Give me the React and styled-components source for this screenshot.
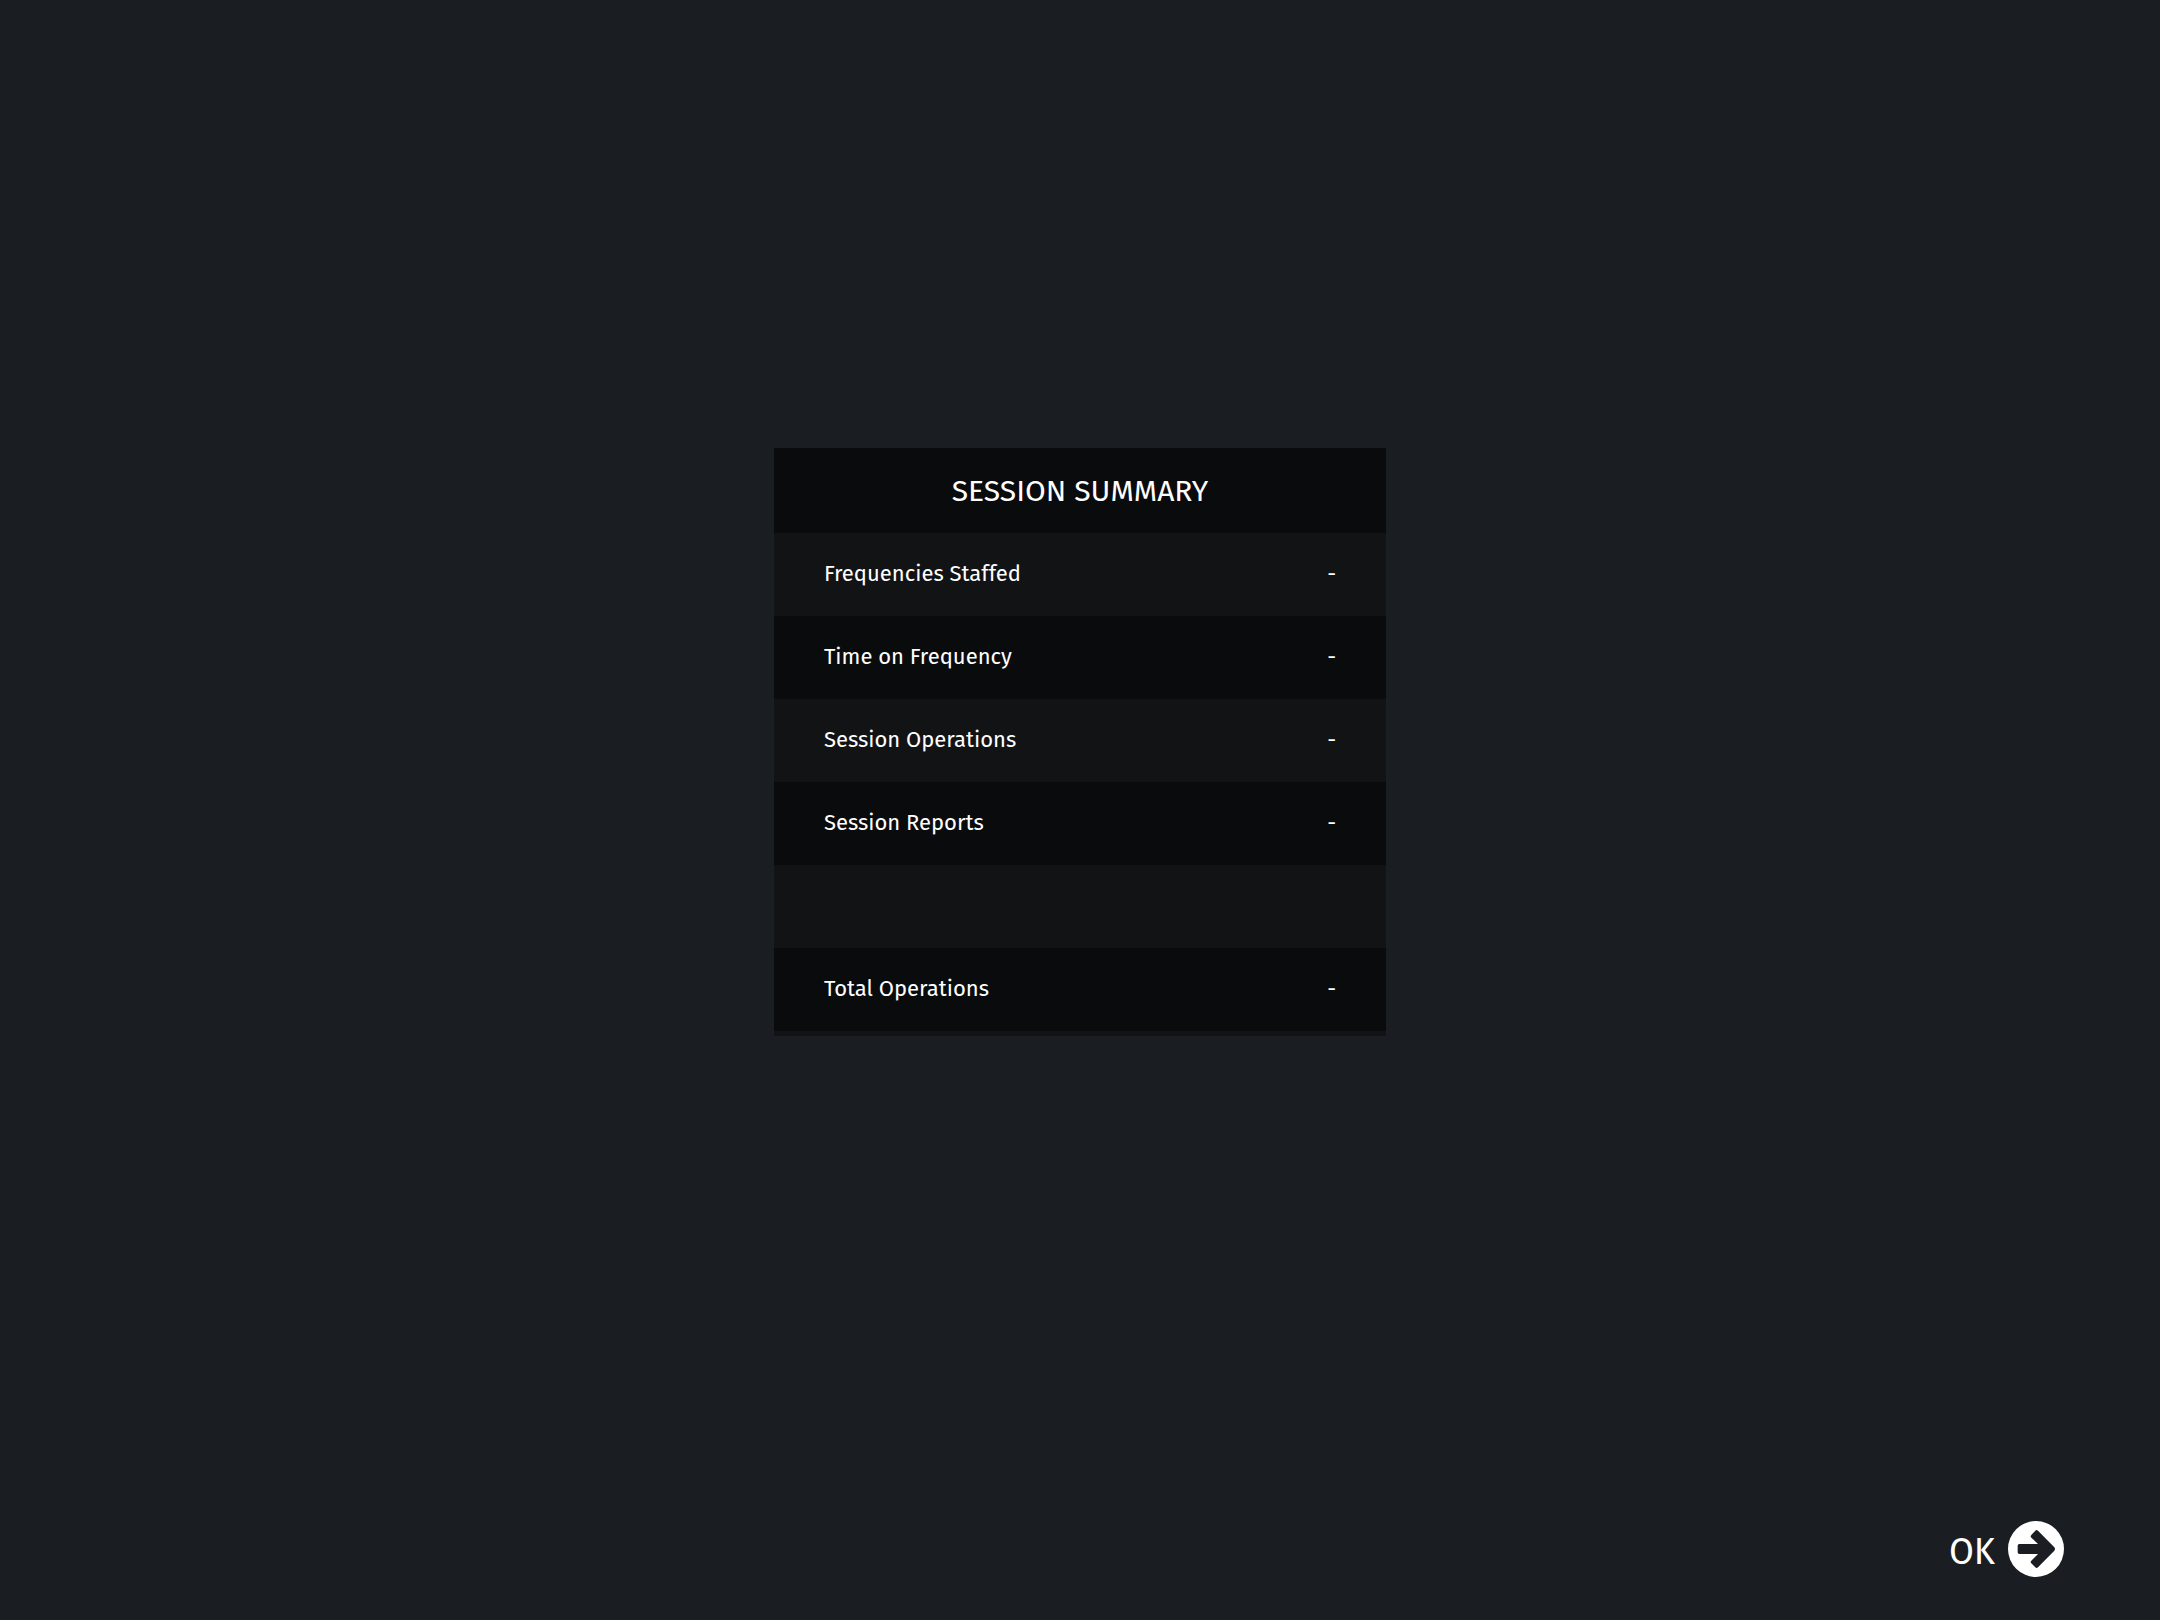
import React from "react";
import styled, { createGlobalStyle } from "styled-components";

const rows = [
    { label: "Frequencies Staffed", value: "-" },
    { label: "Time on Frequency", value: "-" },
    { label: "Session Operations", value: "-" },
    { label: "Session Reports", value: "-" },
    { label: "", value: "" },
    { label: "Total Operations", value: "-" },
];

function App() {
    return (
        <Page>
            <GlobalStyle />
            <Main>
                <Panel>
                    <Title>SESSION SUMMARY</Title>
                    <SummaryTable>
                        <tbody>
                            {rows.map((row, index) => (
                                <SummaryRow key={index}>
                                    {row.label ? (
                                        <Label scope="row">{row.label}</Label>
                                    ) : (
                                        <td />
                                    )}
                                    <Value>{row.value}</Value>
                                </SummaryRow>
                            ))}
                        </tbody>
                    </SummaryTable>
                </Panel>
            </Main>
            <Footer>
                <OkButton type="button">
                    <OkText>OK</OkText>
                    <ArrowIcon viewBox="0 0 168 168" aria-hidden="true">
                        <path
                            fill="currentColor"
                            fillRule="evenodd"
                            d="M84 0a84 84 0 1 1 0 168a84 84 0 1 1 0-168zM90 69L70 50q-4-4 0-8l12-13q4-4 8 0L139 79q4 5 0 10L90 139q-4 4-8 0L70 127q-4-4 0-8L90 99H34q-5 0-5-5V74q0-5 5-5z"
                        />
                    </ArrowIcon>
                </OkButton>
            </Footer>
        </Page>
    );
}

const GlobalStyle = createGlobalStyle`
    * {
        box-sizing: border-box;
    }

    body {
        margin: 0;
        background-color: #1a1d22;
        color: #ffffff;
        font-family: "Fira Sans", "Noto Sans", sans-serif;
    }
`;

const Page = styled.div`
    min-height: 100vh;
    display: flex;
    flex-direction: column;
`;

const Main = styled.main`
    flex: 1;
    display: flex;
    align-items: center;
    justify-content: center;
`;

const Panel = styled.section`
    width: 100%;
    max-width: 612px;
    padding-bottom: 5px;
    background-color: #121315;
`;

const Title = styled.h1`
    margin: 0;
    padding: 25px 50px 24px;
    background-color: #0a0b0d;
    font-size: 30px;
    font-weight: 400;
    line-height: 36px;
    text-align: center;
`;

const SummaryTable = styled.table`
    width: 100%;
    border-collapse: collapse;
    font-size: 22px;
    line-height: 28px;
`;

const SummaryRow = styled.tr`
    height: 83px;

    &:nth-child(even) {
        background-color: #0a0b0d;
    }
`;

const Label = styled.th`
    padding: 0 0 2px 50px;
    font-weight: 400;
    text-align: left;
`;

const Value = styled.td`
    padding: 0 50px 2px 0;
    text-align: right;
`;

const Footer = styled.footer`
    display: flex;
    justify-content: flex-end;
    padding: 37px 96px 43px;
`;

const OkButton = styled.button`
    display: flex;
    align-items: center;
    gap: 13px;
    padding: 0;
    border: none;
    background: none;
    color: inherit;
    font-family: inherit;
    font-size: 36px;
    line-height: 48px;
    cursor: pointer;
`;

const OkText = styled.span`
    padding-top: 5px;
`;

const ArrowIcon = styled.svg`
    width: 56px;
    height: 56px;
`;

export default App;
